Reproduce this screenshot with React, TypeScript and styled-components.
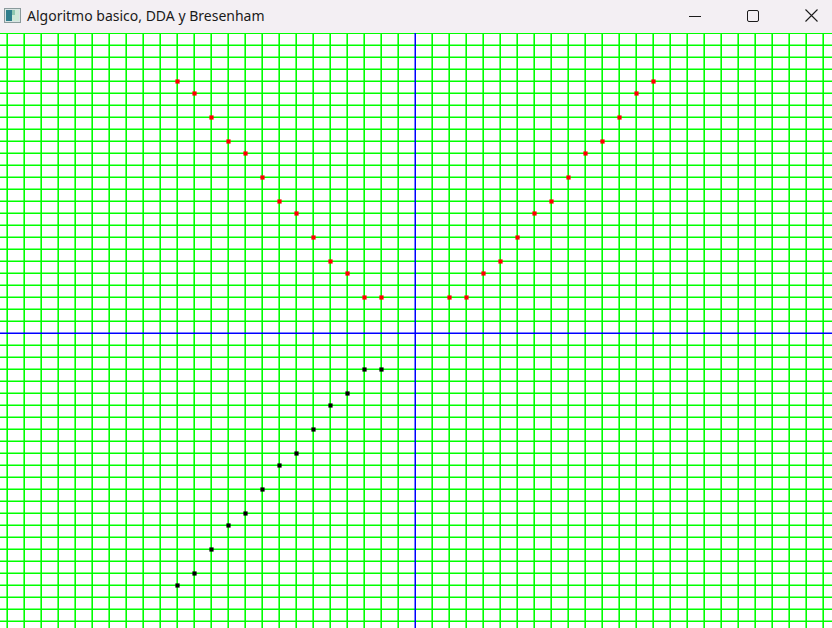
import styled, { createGlobalStyle } from "styled-components";

// Window with an OpenGL-like canvas: green grid, blue axes, plotted points

const UNIT_X = 17;
const UNIT_Y = 12;
const ORIGIN_X = 415;
const ORIGIN_Y = 300;
const CANVAS_W = 832;
const CANVAS_H = 600;

type Pt = [number, number];

const redPoints: Pt[] = [
  [-14, 21], [-13, 20], [-12, 18], [-11, 16], [-10, 15], [-9, 13], [-8, 11],
  [-7, 10], [-6, 8], [-5, 6], [-4, 5], [-3, 3], [-2, 3],
  [2, 3], [3, 3], [4, 5], [5, 6], [6, 8], [7, 10], [8, 11], [9, 13],
  [10, 15], [11, 16], [12, 18], [13, 20], [14, 21],
];

const blackPoints: Pt[] = [
  [-3, -3], [-2, -3], [-4, -5], [-5, -6], [-6, -8], [-7, -10], [-8, -11],
  [-9, -13], [-10, -15], [-11, -16], [-12, -18], [-13, -20], [-14, -21],
];

const toScreen = ([x, y]: Pt) => [ORIGIN_X + x * UNIT_X, ORIGIN_Y - y * UNIT_Y];

function range(from: number, to: number) {
  const out: number[] = [];
  for (let i = from; i <= to; i++) out.push(i);
  return out;
}

function App() {
  // the axes take the place of the grid line through the origin
  const cols = range(-24, 24).filter((k) => k !== 0);
  const rows = range(-25, 24).filter((k) => k !== 0);

  return (
    <>
      <GlobalStyle />
      <Window>
        <TitleBar>
          <AppIcon>
            <svg width="17" height="15" viewBox="0 0 17 15">
              <rect x="0.5" y="0.5" width="16" height="14" fill="#d9e4e4" stroke="#8a9a9c" />
              <rect x="2" y="2" width="6" height="11" fill="#2f7d8c" />
              <rect x="8" y="2" width="7" height="11" fill="#cfe8d8" />
              <rect x="8" y="2" width="3" height="5" fill="#8fc8b0" />
            </svg>
          </AppIcon>
          <Title>Algoritmo basico, DDA y Bresenham</Title>
          <CaptionButtons>
            <CaptionButton>
              <svg width="12" height="12" viewBox="0 0 12 12">
                <line x1="0" y1="6.5" x2="12" y2="6.5" stroke="#1b1b1b" strokeWidth="1" />
              </svg>
            </CaptionButton>
            <CaptionButton>
              <svg width="12" height="12" viewBox="0 0 12 12">
                <rect x="0.5" y="0.5" width="11" height="11" rx="1.5" fill="none" stroke="#1b1b1b" strokeWidth="1" />
              </svg>
            </CaptionButton>
            <CaptionButton>
              <svg width="13" height="13" viewBox="0 0 13 13">
                <path d="M0.5 0.5 L12.5 12.5 M12.5 0.5 L0.5 12.5" stroke="#1b1b1b" strokeWidth="1.1" fill="none" />
              </svg>
            </CaptionButton>
          </CaptionButtons>
        </TitleBar>
        <Canvas>
          <svg width={CANVAS_W} height={CANVAS_H} viewBox={`0 0 ${CANVAS_W} ${CANVAS_H}`}>
            <rect width={CANVAS_W} height={CANVAS_H} fill="#ffffff" />
            {cols.map((k) => {
              const x = ORIGIN_X + k * UNIT_X + 0.2;
              return <line key={`v${k}`} x1={x} y1={0} x2={x} y2={CANVAS_H} stroke="#00ff00" strokeWidth={1.6} />;
            })}
            {rows.map((k) => {
              const y = ORIGIN_Y + k * UNIT_Y + 0.2;
              return <line key={`h${k}`} x1={0} y1={y} x2={CANVAS_W} y2={y} stroke="#00ff00" strokeWidth={1.6} />;
            })}
            {/* axes: a solid 1px core with a half-tone edge, like the GL line smoothing */}
            <rect x={ORIGIN_X - 1} y={0} width={1} height={CANVAS_H} fill="#0000ff" opacity={0.5} />
            <rect x={0} y={ORIGIN_Y - 1} width={CANVAS_W} height={1} fill="#0000ff" opacity={0.5} />
            <rect x={ORIGIN_X} y={0} width={1} height={CANVAS_H} fill="#0000ff" />
            <rect x={0} y={ORIGIN_Y} width={CANVAS_W} height={1} fill="#0000ff" />
            {redPoints.map((p, i) => {
              const [x, y] = toScreen(p);
              return <rect key={`r${i}`} x={x - 1.6} y={y - 1.6} width={4.2} height={4.2} fill="#ff0000" />;
            })}
            {blackPoints.map((p, i) => {
              const [x, y] = toScreen(p);
              return <rect key={`b${i}`} x={x - 1.6} y={y - 1.6} width={4.2} height={4.2} fill="#000000" />;
            })}
          </svg>
        </Canvas>
      </Window>
    </>
  );
}

const GlobalStyle = createGlobalStyle`
  html, body {
    margin: 0;
    padding: 0;
    background: #ffffff;
    overflow: hidden;
  }
`;

const Window = styled.div`
  width: 832px;
  height: 628px;
  display: flex;
  flex-direction: column;
  overflow: hidden;
`;

const TitleBar = styled.div`
  height: 33px;
  flex: none;
  display: flex;
  align-items: center;
  background: #f3eff3;
  font-family: "Noto Sans", "Open Sans", sans-serif;
`;

const AppIcon = styled.div`
  width: 17px;
  height: 15px;
  margin: 0 6px 2px 4px;
  display: flex;
`;

const Title = styled.div`
  flex: 1;
  font-size: 14px;
  color: #1a1a1a;
  padding-bottom: 2px;
  white-space: nowrap;
`;

const CaptionButtons = styled.div`
  display: flex;
  height: 100%;
  margin-right: -8px;
`;

const CaptionButton = styled.div`
  width: 58px;
  height: 100%;
  display: flex;
  align-items: center;
  justify-content: center;
  padding-bottom: 2px;
  box-sizing: border-box;
`;

const Canvas = styled.div`
  flex: 1;
  overflow: hidden;
  background: #ffffff;

  svg {
    display: block;
  }
`;

export default App;
